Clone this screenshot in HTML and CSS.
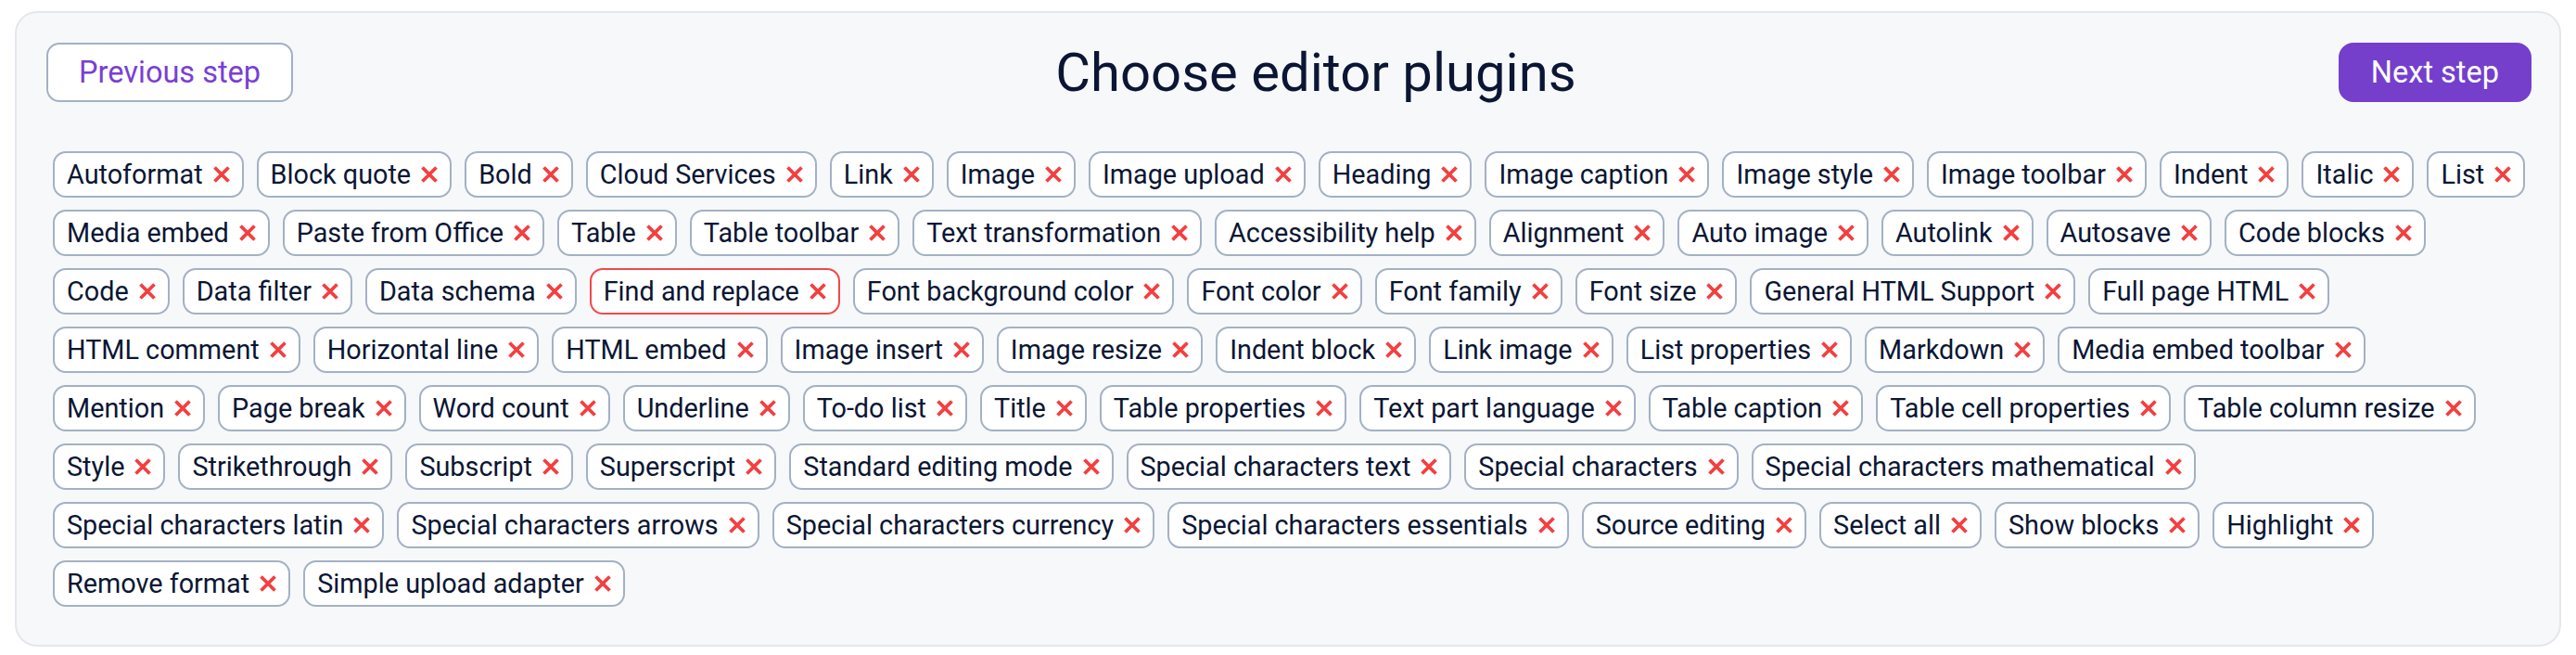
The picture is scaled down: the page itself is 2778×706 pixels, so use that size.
FILE: index.html
```html
<!DOCTYPE html>
<html lang="en">
<head>
<meta charset="utf-8">
<title>Choose editor plugins</title>
<link rel="stylesheet" href="styles.css">
</head>
<body>
<svg width="0" height="0" class="defs" aria-hidden="true">
  <symbol id="x" viewBox="0 0 18 18"><path d="M1.5 1.5 L16.5 16.5 M16.5 1.5 L1.5 16.5" stroke="currentColor" stroke-width="3.8" fill="none"/></symbol>
</svg>
<main class="card">
  <header class="header">
    <button class="btn btn-secondary">Previous step</button>
    <h1 class="title">Choose editor plugins</h1>
    <button class="btn btn-primary">Next step</button>
  </header>
  <div class="tags">
    <span class="tag">Autoformat<svg class="x"><use href="#x"/></svg></span>
    <span class="tag">Block quote<svg class="x"><use href="#x"/></svg></span>
    <span class="tag">Bold<svg class="x"><use href="#x"/></svg></span>
    <span class="tag">Cloud Services<svg class="x"><use href="#x"/></svg></span>
    <span class="tag">Link<svg class="x"><use href="#x"/></svg></span>
    <span class="tag">Image<svg class="x"><use href="#x"/></svg></span>
    <span class="tag">Image upload<svg class="x"><use href="#x"/></svg></span>
    <span class="tag">Heading<svg class="x"><use href="#x"/></svg></span>
    <span class="tag">Image caption<svg class="x"><use href="#x"/></svg></span>
    <span class="tag">Image style<svg class="x"><use href="#x"/></svg></span>
    <span class="tag">Image toolbar<svg class="x"><use href="#x"/></svg></span>
    <span class="tag">Indent<svg class="x"><use href="#x"/></svg></span>
    <span class="tag">Italic<svg class="x"><use href="#x"/></svg></span>
    <span class="tag">List<svg class="x"><use href="#x"/></svg></span>
    <span class="tag">Media embed<svg class="x"><use href="#x"/></svg></span>
    <span class="tag">Paste from Office<svg class="x"><use href="#x"/></svg></span>
    <span class="tag">Table<svg class="x"><use href="#x"/></svg></span>
    <span class="tag">Table toolbar<svg class="x"><use href="#x"/></svg></span>
    <span class="tag">Text transformation<svg class="x"><use href="#x"/></svg></span>
    <span class="tag">Accessibility help<svg class="x"><use href="#x"/></svg></span>
    <span class="tag">Alignment<svg class="x"><use href="#x"/></svg></span>
    <span class="tag">Auto image<svg class="x"><use href="#x"/></svg></span>
    <span class="tag">Autolink<svg class="x"><use href="#x"/></svg></span>
    <span class="tag">Autosave<svg class="x"><use href="#x"/></svg></span>
    <span class="tag">Code blocks<svg class="x"><use href="#x"/></svg></span>
    <span class="tag">Code<svg class="x"><use href="#x"/></svg></span>
    <span class="tag">Data filter<svg class="x"><use href="#x"/></svg></span>
    <span class="tag">Data schema<svg class="x"><use href="#x"/></svg></span>
    <span class="tag tag-warn">Find and replace<svg class="x"><use href="#x"/></svg></span>
    <span class="tag">Font background color<svg class="x"><use href="#x"/></svg></span>
    <span class="tag">Font color<svg class="x"><use href="#x"/></svg></span>
    <span class="tag">Font family<svg class="x"><use href="#x"/></svg></span>
    <span class="tag">Font size<svg class="x"><use href="#x"/></svg></span>
    <span class="tag">General HTML Support<svg class="x"><use href="#x"/></svg></span>
    <span class="tag">Full page HTML<svg class="x"><use href="#x"/></svg></span>
    <span class="tag">HTML comment<svg class="x"><use href="#x"/></svg></span>
    <span class="tag">Horizontal line<svg class="x"><use href="#x"/></svg></span>
    <span class="tag">HTML embed<svg class="x"><use href="#x"/></svg></span>
    <span class="tag">Image insert<svg class="x"><use href="#x"/></svg></span>
    <span class="tag">Image resize<svg class="x"><use href="#x"/></svg></span>
    <span class="tag">Indent block<svg class="x"><use href="#x"/></svg></span>
    <span class="tag">Link image<svg class="x"><use href="#x"/></svg></span>
    <span class="tag">List properties<svg class="x"><use href="#x"/></svg></span>
    <span class="tag">Markdown<svg class="x"><use href="#x"/></svg></span>
    <span class="tag">Media embed toolbar<svg class="x"><use href="#x"/></svg></span>
    <span class="tag">Mention<svg class="x"><use href="#x"/></svg></span>
    <span class="tag">Page break<svg class="x"><use href="#x"/></svg></span>
    <span class="tag">Word count<svg class="x"><use href="#x"/></svg></span>
    <span class="tag">Underline<svg class="x"><use href="#x"/></svg></span>
    <span class="tag">To-do list<svg class="x"><use href="#x"/></svg></span>
    <span class="tag">Title<svg class="x"><use href="#x"/></svg></span>
    <span class="tag">Table properties<svg class="x"><use href="#x"/></svg></span>
    <span class="tag">Text part language<svg class="x"><use href="#x"/></svg></span>
    <span class="tag">Table caption<svg class="x"><use href="#x"/></svg></span>
    <span class="tag">Table cell properties<svg class="x"><use href="#x"/></svg></span>
    <span class="tag">Table column resize<svg class="x"><use href="#x"/></svg></span>
    <span class="tag">Style<svg class="x"><use href="#x"/></svg></span>
    <span class="tag">Strikethrough<svg class="x"><use href="#x"/></svg></span>
    <span class="tag">Subscript<svg class="x"><use href="#x"/></svg></span>
    <span class="tag">Superscript<svg class="x"><use href="#x"/></svg></span>
    <span class="tag">Standard editing mode<svg class="x"><use href="#x"/></svg></span>
    <span class="tag">Special characters text<svg class="x"><use href="#x"/></svg></span>
    <span class="tag">Special characters<svg class="x"><use href="#x"/></svg></span>
    <span class="tag">Special characters mathematical<svg class="x"><use href="#x"/></svg></span>
    <span class="tag">Special characters latin<svg class="x"><use href="#x"/></svg></span>
    <span class="tag">Special characters arrows<svg class="x"><use href="#x"/></svg></span>
    <span class="tag">Special characters currency<svg class="x"><use href="#x"/></svg></span>
    <span class="tag">Special characters essentials<svg class="x"><use href="#x"/></svg></span>
    <span class="tag">Source editing<svg class="x"><use href="#x"/></svg></span>
    <span class="tag">Select all<svg class="x"><use href="#x"/></svg></span>
    <span class="tag">Show blocks<svg class="x"><use href="#x"/></svg></span>
    <span class="tag">Highlight<svg class="x"><use href="#x"/></svg></span>
    <span class="tag">Remove format<svg class="x"><use href="#x"/></svg></span>
    <span class="tag">Simple upload adapter<svg class="x"><use href="#x"/></svg></span>
  </div>
</main>
</body>
</html>
```
FILE: styles.css
```css
* { box-sizing: border-box; }
html, body { margin: 0; background: #ffffff; }
body {
  padding: 12px 16px 9px 16px;
  font-family: Roboto, "Liberation Sans", sans-serif;
  color: #0a1633;
}
.defs { position: absolute; width: 0; height: 0; overflow: hidden; }
.card {
  background: #f7f8fa;
  border: 2px solid #e3e8ee;
  border-radius: 24px;
  padding: 32px 30px 41px 32px;
}
.header {
  display: flex;
  align-items: center;
  justify-content: space-between;
  height: 64px;
  margin-bottom: 53px;
}
.title {
  margin: 0;
  font-size: 58px;
  font-weight: 400;
  line-height: 1;
  color: #0a1633;
}
.btn {
  font-family: Roboto, "Liberation Sans", sans-serif;
  font-size: 32.5px;
  height: 64px;
  padding: 0 33px;
  border-radius: 14px;
  border: 2px solid #a3b1c4;
  cursor: pointer;
}
.btn-secondary { background: #ffffff; color: #7a3fd3; }
.btn-primary { background: #753fcc; border-color: #753fcc; color: #ffffff; border-radius: 16px; }
.tags {
  display: flex;
  flex-wrap: wrap;
  gap: 13px 14px;
  margin-left: 7px;
  margin-right: 4px;
}
.tag {
  display: inline-flex;
  align-items: center;
  height: 50px;
  padding: 0 13px;
  background: #ffffff;
  border: 2px solid #a3b1c4;
  border-radius: 14px;
  font-size: 28.8px;
  white-space: nowrap;
  color: #0a1633;
}
.tag-warn { border-color: #f24848; }
.x {
  width: 18px;
  height: 18px;
  margin-left: 11px;
  color: #f43f3f;
  flex: none;
}
```
